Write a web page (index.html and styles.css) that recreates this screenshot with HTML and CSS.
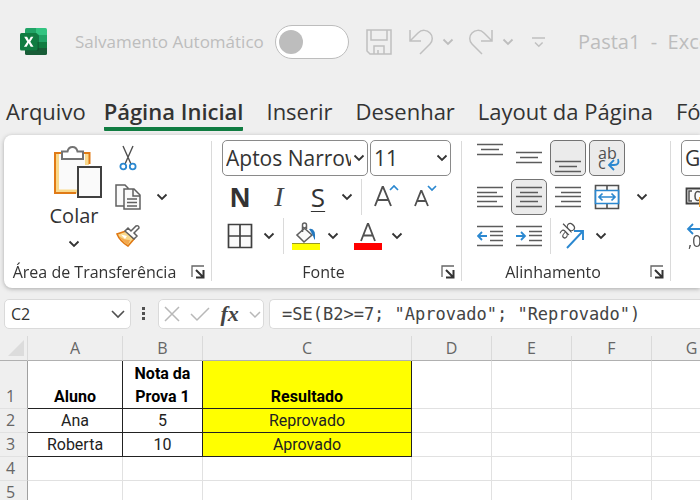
FILE: index.html
```html
<!DOCTYPE html>
<html lang="pt-BR">
<head>
<meta charset="utf-8">
<title>Pasta1 - Excel</title>
<link rel="stylesheet" href="styles.css">
</head>
<body>
<svg class="defs" aria-hidden="true">
  <symbol id="chev" viewBox="0 0 16 16"><path d="M3.500 5.500l4.500 4.500 4.500-4.500" fill="none" stroke="currentColor" stroke-width="1.800"/></symbol>
  <symbol id="launch" viewBox="0 0 14 14"><path d="M1 12V1h12" fill="none" stroke="#666" stroke-width="1.300"/><path d="M5 5l7 7M12.500 5v7.500H5" fill="none" stroke="#333" stroke-width="2"/></symbol>
</svg>

<header class="title-bar">
  <svg class="logo" viewBox="0 0 27 27" role="img" aria-label="Excel">
    <path d="M6.500 0H16v7H5V1.500Q5 0 6.500 0z" fill="#21a366"/>
    <path d="M16 0h9.500Q27 0 27 1.500V7H16z" fill="#33c481"/>
    <path d="M5 7h11v7H5z" fill="#107c41"/><path d="M16 7h11v7H16z" fill="#21a366"/>
    <path d="M5 14h11v6H5z" fill="#185c37"/><path d="M16 14h11v6H16z" fill="#107c41"/>
    <path d="M5 20h22v5.500q0 1.500-1.500 1.500h-19Q5 27 5 25.500z" fill="#185c37"/>
    <path d="M5 6h12q2 0 2 2v13q0 2-2 2H5z" fill="#0b4a2a" opacity=".5"/>
    <rect y="5" width="17.500" height="17.500" rx="1.500" fill="#107c41"/>
    <path d="M4.200 8.700h2.900L8.900 12.300l1.900-3.600h2.600L10.300 13.700l3.200 5.100h-2.800l-2-3.700-2 3.700H3.900l3.300-5.100z" fill="#fff"/>
  </svg>
  <label class="autosave" for="autosave">Salvamento Automático</label>
  <input class="toggle" type="checkbox" id="autosave">
  <div class="quick">
    <button aria-label="Salvar"><svg width="26" height="26" viewBox="0 0 26 26"><path d="M1 1h24v24H4l-3-3zM5 1v10h16V1M8 25v-8h10v8M12 25v-4" /></svg></button>
    <button class="undo" aria-label="Desfazer"><svg width="26" height="26" viewBox="0 0 26 26"><path d="M2 1v11h11M2 12l8-8c4-4 9-3 12 0s3 8 0 11L12 25"/></svg></button>
    <button aria-label="Opções de desfazer"><svg class="chev"><use href="#chev"/></svg></button>
    <button class="redo" aria-label="Refazer"><svg width="26" height="26" viewBox="0 0 26 26"><path d="M24 1v11H13M24 12l-8-8c-4-4-9-3-12 0s-3 8 0 11l10 10"/></svg></button>
    <button aria-label="Opções de refazer"><svg class="chev"><use href="#chev"/></svg></button>
    <button class="more" aria-label="Personalizar"><svg width="14" height="14" viewBox="0 0 14 14"><path d="M0 3h13M3 7.500l3.800 3.800 3.800-3.800" stroke-width="2"/></svg></button>
  </div>
  <span class="doc">Pasta1&nbsp; -&nbsp; Excel</span>
</header>

<nav class="tabs">
  <a href="#">Arquivo</a>
  <a href="#" class="active" aria-current="page">Página Inicial</a>
  <a href="#">Inserir</a>
  <a href="#">Desenhar</a>
  <a href="#">Layout da Página</a>
  <a href="#">Fórmulas</a>
</nav>

<main>
<div class="ribbon">
  <section class="group clipboard">
    <div class="body columns">
      <button class="paste">
        <svg width="58" height="56" viewBox="-8 0 58 56">
          <path d="M2 9h34v14H25v26H2z" fill="#fafafa"/>
          <path d="M4 9v38.500h20M34 10v11" fill="none" stroke="#f9d98c" stroke-width="4"/>
          <path d="M36.500 20V9H2v40h21" fill="none" stroke="#e07a16" stroke-width="2"/>
          <path d="M9 15V7.500h5.500q1-4.500 5-4.500t5 4.500H30V15z" fill="#fff" stroke="#737373" stroke-width="2"/>
          <path d="M25 23h23v30H25z" fill="#fafafa" stroke="#404040" stroke-width="2"/>
        </svg>
        <span>Colar</span>
        <svg class="chev"><use href="#chev"/></svg>
      </button>
      <div class="small">
        <div class="row"><button class="tool" aria-label="Recortar"><svg width="18" height="26" viewBox="0 0 18 26"><path d="M4 1l8 18M14 1L6 19" fill="none" stroke="#505050" stroke-width="1.400"/><g fill="#fff" stroke="#2b88d0" stroke-width="1.800"><circle cx="4.300" cy="21.500" r="2.900"/><circle cx="13.700" cy="21.500" r="2.900"/></g></svg></button></div>
        <div class="row"><button class="tool" aria-label="Copiar"><svg width="26" height="26" viewBox="0 0 26 26"><g fill="#fafafa" stroke="#606060" stroke-width="1.500"><path d="M1 1h9l3 3v18H1z"/><path d="M9 5h10l6 6v14H9z"/><path d="M18 5v7h7M12 15h10M12 18.500h10M12 22h10" fill="none"/></g></svg></button><button class="drop" aria-label="Opções de copiar"><svg class="chev"><use href="#chev"/></svg></button></div>
        <div class="row"><button class="tool" aria-label="Pincel de formatação"><svg width="26" height="22" viewBox="0 0 26 22"><path d="M11 6L2 9c2 5 6 9 11 12l6-7z" fill="#f9d98c" stroke="#e07a16" stroke-width="1.600"/><path d="M4 11c4 3 7 4 11 4l-2 5C9 17 6 15 4 11z" fill="#f3a94f"/><path d="M6 9.500l6 1.500-2 3z" fill="#fff"/><path d="M10 6l3-3 3 3 5-5q3-1 3 2l-5 5 3 3-3 3z" fill="#fff" stroke="#606060" stroke-width="1.500"/></svg></button></div>
      </div>
    </div>
    <footer><span>Área de Transferência</span><button aria-label="Configurações da área de transferência"><svg width="14" height="14"><use href="#launch"/></svg></button></footer>
  </section>

  <section class="group font">
    <div class="body">
      <div class="row combos">
        <div class="combo family"><select aria-label="Fonte"><option>Aptos Narrow</option></select><svg class="chev"><use href="#chev"/></svg></div>
        <div class="combo size"><select aria-label="Tamanho da fonte"><option>11</option></select><svg class="chev"><use href="#chev"/></svg></div>
      </div>
      <div class="row">
        <button class="tool bold">N</button><button class="tool italic">I</button><button class="tool under">S</button>
        <button class="drop" aria-label="Opções de sublinhado"><svg class="chev"><use href="#chev"/></svg></button>
        <i class="sep"></i>
        <button class="tool" aria-label="Aumentar fonte"><svg width="26" height="26" viewBox="0 0 26 26" fill="none"><path d="M2 22L9.500 3h.6L18 22M4.500 16h11" stroke="#505050" stroke-width="1.900"/><path d="M17 6l4-4 4 4" stroke="#2b88d0" stroke-width="1.700"/></svg></button>
        <button class="tool" aria-label="Diminuir fonte"><svg width="26" height="26" viewBox="0 0 26 26" fill="none"><path d="M3 22L9 7h.6L16 22M5 17h9" stroke="#505050" stroke-width="1.800"/><path d="M16 2l4 4 4-4" stroke="#2b88d0" stroke-width="1.700"/></svg></button>
      </div>
      <div class="row">
        <button class="tool" aria-label="Bordas"><svg width="26" height="26" viewBox="0 0 26 26"><path d="M1.500 1.500h23v23h-23zM13 1.500v23M1.500 13h23" fill="#fafafa" stroke="#404040" stroke-width="1.700"/></svg></button>
        <button class="drop" aria-label="Opções de bordas"><svg class="chev"><use href="#chev"/></svg></button>
        <i class="sep"></i>
        <button class="tool fill" aria-label="Cor de preenchimento"><svg width="28" height="28" viewBox="0 0 28 28"><path d="M11 5l9 8-8 7-7-7 9-8" fill="#fafafa" stroke="#606060" stroke-width="1.600"/><path d="M10.500 10V3q0-2 2-2t2 2v4" fill="none" stroke="#606060" stroke-width="1.500"/><path d="M17 7q7-2 6 11-1-1-2-4l-2-4z" fill="#2478be"/><path d="M0 21h28v7H0z" fill="#ff0"/><path d="M0 21.500h28" stroke="#9a9a20"/></svg></button>
        <button class="drop" aria-label="Opções de preenchimento"><svg class="chev"><use href="#chev"/></svg></button>
        <button class="tool color" aria-label="Cor da fonte"><svg width="28" height="28" viewBox="0 0 28 28"><path d="M7 19L13.700 2h.6L21 19M9.500 13.500h9" fill="none" stroke="#505050" stroke-width="1.800"/><path d="M0 21h28v7H0z" fill="red"/></svg></button>
        <button class="drop" aria-label="Opções de cor da fonte"><svg class="chev"><use href="#chev"/></svg></button>
      </div>
    </div>
    <footer><span>Fonte</span><button aria-label="Configurações de fonte"><svg width="14" height="14"><use href="#launch"/></svg></button></footer>
  </section>

  <section class="group align">
    <div class="body">
      <div class="row">
        <button class="tool" aria-label="Alinhar em cima"><svg class="lines" viewBox="0 0 26 32"><path d="M0 2.500h26M4 7.500h18M0 12.500h26"/></svg></button>
        <button class="tool" aria-label="Alinhar no meio"><svg class="lines" viewBox="0 0 26 32"><path d="M0 10.500h26M4 15.500h18M0 20.500h26"/></svg></button>
        <button class="tool on" aria-label="Alinhar embaixo"><svg class="lines" viewBox="0 0 26 32"><path d="M0 19.500h26M4 24.500h18M0 29.500h26"/></svg></button>
        <button class="tool on" aria-label="Quebrar texto automaticamente"><svg width="28" height="30" viewBox="0 0 28 30"><text x="5" y="16" class="glyph">ab</text><text x="5" y="26" class="glyph">c</text><path d="M25 16q2 6-4 6h-4M21 17l-5 5 5 5" fill="none" stroke="#2b88d0" stroke-width="1.800"/></svg></button>
      </div>
      <div class="row">
        <button class="tool" aria-label="Alinhar à esquerda"><svg class="lines" viewBox="0 0 26 32"><path d="M0 6.500h26M0 11.500h20M0 15.500h26M0 20.500h20M0 25.500h26"/></svg></button>
        <button class="tool on" aria-label="Centralizar"><svg class="lines" viewBox="0 0 26 32"><path d="M0 6.500h26M4 11.500h18M0 15.500h26M4 20.500h18M0 25.500h26"/></svg></button>
        <button class="tool" aria-label="Alinhar à direita"><svg class="lines" viewBox="0 0 26 32"><path d="M0 6.500h26M6 11.500h20M0 15.500h26M6 20.500h20M0 25.500h26"/></svg></button>
        <button class="tool" aria-label="Mesclar e centralizar"><svg width="26" height="26" viewBox="0 0 26 26"><path d="M1.500 1.500h23v23h-23zM13 1v5M13 20v5" fill="#fafafa" stroke="#505050" stroke-width="1.600"/><path d="M1.500 6.500h23v13h-23z" fill="#fff" stroke="#2b88d0" stroke-width="1.700"/><path d="M5 13h16M8.500 9.500L5 13l3.500 3.500M17.500 9.500L21 13l-3.500 3.500" fill="none" stroke="#2b88d0" stroke-width="1.700"/></svg></button>
        <button class="drop apart" aria-label="Opções de mesclagem"><svg class="chev"><use href="#chev"/></svg></button>
      </div>
      <div class="row">
        <button class="tool" aria-label="Diminuir recuo"><svg class="lines" viewBox="0 0 26 32"><path d="M0 6.500h26M13 11.500h13M13 15.500h13M13 20.500h13M0 25.500h26"/><path class="blue" d="M10 16H1M5 12l-4 4 4 4"/></svg></button>
        <button class="tool" aria-label="Aumentar recuo"><svg class="lines" viewBox="0 0 26 32"><path d="M0 6.500h26M13 11.500h13M13 15.500h13M13 20.500h13M0 25.500h26"/><path class="blue" d="M0 16h9M5 12l4 4-4 4"/></svg></button>
        <i class="sep tight"></i>
        <button class="tool" aria-label="Orientação"><svg class="orient" width="28" height="28" viewBox="0 0 28 28"><text x="6" y="18" class="glyph" transform="rotate(-45 6 18)">ab</text><path d="M9 26L25 9M16 9h9v9" fill="none" stroke="#2b88d0" stroke-width="1.900"/></svg></button>
        <button class="drop" aria-label="Opções de orientação"><svg class="chev"><use href="#chev"/></svg></button>
      </div>
    </div>
    <footer><span>Alinhamento</span><button aria-label="Configurações de alinhamento"><svg width="14" height="14"><use href="#launch"/></svg></button></footer>
  </section>

  <section class="group number">
    <div class="body">
      <div class="row"><div class="combo"><select aria-label="Formato de número"><option>Geral</option></select></div></div>
      <div class="row"><button class="tool" aria-label="Formato de contabilização"><svg width="28" height="26" viewBox="0 0 28 26"><path d="M1.500 4.500h27v15h-27z" fill="#fafafa" stroke="#404040" stroke-width="1.800"/><path d="M7 7H4v10h3M15 8q-5-2-5 4t5 4M22 8q-5 0-5 4t3 4" fill="none" stroke="#505050" stroke-width="1.500"/><path d="M14 13h14v10H14z" fill="#f0a030"/></svg></button></div>
      <div class="row"><button class="tool" aria-label="Aumentar casas decimais"><svg width="28" height="28" viewBox="0 0 28 28"><path d="M15 7H3M8 2L3 7l5 5" fill="none" stroke="#2b88d0" stroke-width="1.800"/><text x="3" y="25" class="glyph">,00</text></svg></button></div>
    </div>
  </section>
</div>

<div class="formula-bar">
  <div class="name-box"><input type="text" value="C2" aria-label="Caixa de nome"><svg class="chev wide" viewBox="0 0 16 16"><path d="M2 5l6 6 6-6"/></svg></div>
  <svg class="dots" width="4" height="16" viewBox="0 0 4 16"><path d="M0 1h3v3H0zM0 6h3v3H0zM0 11h3v3H0z" fill="#505050"/></svg>
  <div class="fx">
    <button aria-label="Cancelar"><svg width="16" height="16" viewBox="0 0 16 16"><path d="M1 1l14 14M15 1L1 15"/></svg></button>
    <button aria-label="Inserir"><svg width="20" height="16" viewBox="0 0 20 16"><path d="M1 8l6 6L19 2"/></svg></button>
    <button class="fn">fx</button>
    <button aria-label="Funções recentes"><svg width="12" height="16" viewBox="0 0 12 16"><path d="M1 6l5 5 5-5"/></svg></button>
  </div>
  <input class="formula" type="text" aria-label="Fórmula" value='=SE(B2&gt;=7; "Aprovado"; "Reprovado")'>
</div>

<div class="sheet">
<table>
  <colgroup><col class="c-row"><col class="c-a"><col class="c-b"><col class="c-c"><col class="c-n"><col class="c-n"><col class="c-n"><col class="c-n"></colgroup>
  <thead><tr><th class="corner" aria-label="Selecionar tudo"><svg width="16" height="16" viewBox="0 0 16 16"><path d="M16 0v16H0z" fill="#dcdcdc"/></svg></th><th>A</th><th>B</th><th>C</th><th>D</th><th>E</th><th>F</th><th>G</th></tr></thead>
  <tbody>
    <tr class="tall"><th>1</th><td class="box">Aluno</td><td class="box">Nota da Prova 1</td><td class="box hl">Resultado</td><td></td><td></td><td></td><td></td></tr>
    <tr><th>2</th><td class="box">Ana</td><td class="box">5</td><td class="box hl">Reprovado</td><td></td><td></td><td></td><td></td></tr>
    <tr><th>3</th><td class="box">Roberta</td><td class="box">10</td><td class="box hl">Aprovado</td><td></td><td></td><td></td><td></td></tr>
    <tr><th>4</th><td></td><td></td><td></td><td></td><td></td><td></td><td></td></tr>
    <tr><th>5</th><td></td><td></td><td></td><td></td><td></td><td></td><td></td></tr>
  </tbody>
</table>
</div>
</main>
</body>
</html>
```
FILE: styles.css
```css
* { box-sizing: border-box; }
body {
  margin: 0;
  height: 100vh;
  overflow: hidden;
  background: #efefef;
  color: #333;
  font-family: "Open Sans", "Noto Sans", sans-serif;
}
button {
  display: flex;
  align-items: center;
  justify-content: center;
  flex: none;
  padding: 0;
  border: 0;
  background: none;
  color: #333;
  font: inherit;
}
svg { display: block; flex: none; }
.defs { display: none; }
.chev { width: 16px; height: 16px; }

/* Title bar */
.title-bar {
  display: flex;
  align-items: center;
  height: 83px;
  padding-left: 20px;
  color: #bdbdbd;
  white-space: nowrap;
}
.logo { width: 27px; height: 27px; margin-right: 28px; }
.autosave { flex: none; width: 200px; font-size: 17px; }
.toggle {
  appearance: none;
  flex: none;
  width: 74px;
  height: 34px;
  margin: 0 17px 0 0;
  padding: 4px 3px;
  border: 1px solid #bdbdbd;
  border-radius: 17px;
  background: #fff;
}
.toggle::before {
  content: "";
  display: block;
  width: 24px;
  height: 24px;
  border-radius: 50%;
  background: #bdbdbd;
}
.quick { display: flex; align-items: center; }
.quick button { color: #bdbdbd; }
.quick path { fill: none; stroke: #c0c0c0; stroke-width: 1.5px; }
.quick .undo { margin: 0 6px 0 16px; }
.quick .redo { margin: 0 6px 0 12px; }
.quick .more { margin-left: 16px; }
.doc { margin-left: 32px; font-size: 20px; line-height: 30px; }

/* Tabs */
.tabs {
  display: flex;
  gap: 23px;
  height: 52px;
  padding: 13px 0 0 6px;
  overflow: hidden;
  font-size: 22px;
  line-height: 31px;
  white-space: nowrap;
}
.tabs a { flex: none; height: 35px; color: #333; text-decoration: none; }
.tabs a:first-child { margin-right: -5px; }
.tabs .active { border-bottom: 4px solid #107c41; border-radius: 1px; font-weight: 600; }

/* Ribbon */
.ribbon {
  display: flex;
  height: 153px;
  margin-left: 4px;
  overflow: hidden;
  border-radius: 8px 0 0 8px;
  background: #fff;
  filter: drop-shadow(0 1px 2px #aaa);
}
.group {
  display: flex;
  flex: none;
  flex-direction: column;
  padding-top: 3px;
  background: linear-gradient(#dadada, #dadada) right 6px / 1px 140px no-repeat;
}
.group .body { padding-left: 10px; }
.group footer {
  display: flex;
  align-items: center;
  height: 34px;
  padding-right: 7px;
  font-size: 16px;
  white-space: nowrap;
}
.group footer span { flex: 1; text-align: center; }
.group footer button { justify-content: flex-end; width: 20px; }
.clipboard { width: 208px; }
.font { width: 250px; }
.align { width: 209px; }
.number { width: 200px; background: none; }
.row { display: flex; align-items: center; gap: 3px; height: 39px; }
.group .columns { display: flex; padding-left: 0; }
.paste { flex-direction: column; justify-content: flex-start; width: 100px; padding: 6px 0 0 40px; }
.paste span { font-size: 20px; line-height: 32px; }
.paste .chev { margin-top: 4px; }
.small { padding-left: 6px; }
.small .drop { margin-left: 5px; }
.tool { width: 36px; height: 36px; border-radius: 5px; }
.tool.on { border: 1px solid #737373; background: #ebebeb; }
.drop { width: 16px; height: 36px; }
.sep { width: 1px; height: 36px; margin: 0 3px; background: #dadada; }
.sep.tight { margin: 0; }
.apart { margin-left: 6px; }
.tool.fill { width: 32px; }
.tool.color { margin-left: 6px; }
.bold { font-size: 26px; font-weight: 700; line-height: 32px; }
.italic { color: #444; font: italic 28px/32px "Liberation Serif", serif; }
.under {
  font-size: 26px;
  line-height: 32px;
  text-decoration: underline;
  text-decoration-thickness: 1px;
  text-underline-offset: 4px;
}
.lines { width: 26px; height: 32px; }
.lines path { fill: none; stroke: #5c5c5c; stroke-width: 1.5px; }
.lines .blue { stroke: #2b88d0; stroke-width: 1.8px; }
.orient { overflow: visible; }
.glyph { fill: #505050; font-size: 16px; }

.combo {
  display: flex;
  align-items: center;
  width: 81px;
  height: 36px;
  border: 1px solid #8a8a8a;
  border-radius: 5px;
  background: #fff;
}
.combo select {
  appearance: none;
  flex: 1;
  min-width: 0;
  height: 34px;
  padding: 0 0 0 3px;
  border: 0;
  background: none;
  color: #333;
  font: 21px "Open Sans", sans-serif;
}
.combos { gap: 2px; }
.combo.family { width: 146px; }

/* Formula bar */
.formula-bar { display: flex; align-items: center; height: 48px; padding: 4px 0 0 4px; }
.name-box, .fx, .formula {
  height: 30px;
  border: 1px solid #dadada;
  border-radius: 5px;
  background: #fff;
}
.name-box { display: flex; align-items: center; width: 127px; padding-right: 4px; }
.name-box input {
  flex: 1;
  min-width: 0;
  padding: 0 0 0 6px;
  border: 0;
  background: none;
  color: #333;
  font: 16px "Open Sans", sans-serif;
}
.wide path { fill: none; stroke: #505050; stroke-width: 1.6px; }
.dots { margin: 0 12px 0 11px; }
.fx { display: flex; align-items: center; justify-content: space-between; width: 106px; padding: 0 2px 0 5px; }
.fx path { fill: none; stroke: #b8b8b8; stroke-width: 1.5px; }
.fx .fn { color: #444; font: italic bold 22px "Liberation Serif", serif; }
.formula {
  flex: 1;
  min-width: 0;
  margin-left: 5px;
  padding: 0 0 0 12px;
  border-right: 0;
  border-radius: 5px 0 0 5px;
  color: #444;
  font: 17px "DejaVu Sans Mono", monospace;
}

/* Sheet */
.sheet { overflow: hidden; }
table { width: 732px; border-collapse: separate; border-spacing: 0; table-layout: fixed; }
.c-row { width: 28px; }
.c-a { width: 95px; }
.c-b { width: 80px; }
.c-c { width: 209px; }
.c-n { width: 80px; }
th, td { height: 24px; padding: 0; border: 0 solid #e1e1e1; border-width: 0 1px 1px 0; line-height: 23px; }
th { color: #666; font-size: 16px; font-weight: 400; }
thead th { height: 25px; border-color: #dadada; border-bottom-color: #b0b0b0; }
.corner svg { margin-left: 8px; }
tbody th { padding-right: 6px; border-right-color: #a0a0a0; text-align: center; }
td { background: #fff; color: #222; font: 16px/23px Roboto, sans-serif; text-align: center; }
.tall th, .tall td { height: 48px; line-height: 23px; vertical-align: bottom; }
.tall td { font-weight: 700; color: #000; }
td.box { border-color: #222; }
.hl { background: #ff0; }
```
